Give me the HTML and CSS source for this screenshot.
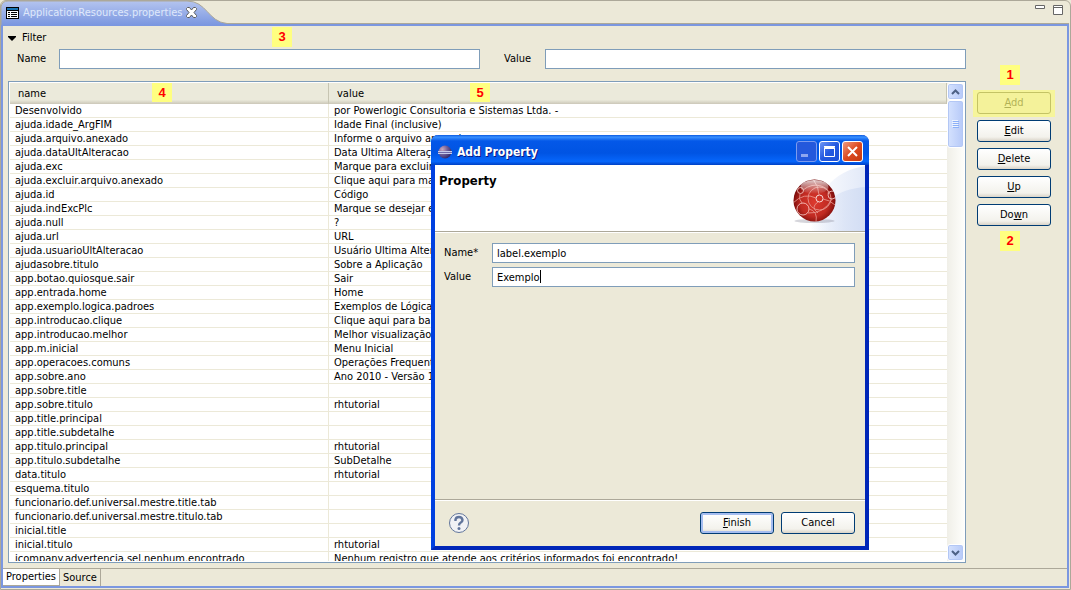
FILE: index.html
```html
<!DOCTYPE html>
<html lang="pt-BR">
<head>
<meta charset="utf-8">
<title>ApplicationResources.properties</title>
<link rel="stylesheet" href="styles.css">
</head>
<body>
<div class="view">
  <header class="view-head">
    <div class="file-tab">
      <svg class="tab-shape" width="232" height="25" viewBox="0 0 232 25" aria-hidden="true">
        <defs><linearGradient id="tabFill" x1="0" y1="0" x2="0" y2="1"><stop offset="0" stop-color="#b4c4ef"/><stop offset="1" stop-color="#7b97e0"/></linearGradient></defs>
        <path d="M0 25V7Q1 1 7 1H186C206 1 207 22 226 23.500H232V25Z" fill="url(#tabFill)"/>
        <path d="M0 25V7Q1 1 7 1H186C206 1 207 22 226 23.500H232" fill="none" stroke="#aca899"/>
      </svg>
      <svg class="file-icon" width="13" height="12" viewBox="0 0 13 12" shape-rendering="crispEdges" aria-hidden="true">
        <path d="M0 0h13v12H0z"/><path d="M1 1h11v2H1z" fill="#1773b5"/><path d="M1 4h11v7H1z" fill="#fff"/>
        <path d="M2 5h2v1H2zm3 0h6v1H5zM2 7h2v1H2zm3 0h6v1H5zM2 9h2v1H2zm3 0h6v1H5z"/>
      </svg>
      <span class="file-name">ApplicationResources.properties</span>
      <button class="tab-close" aria-label="Close"><svg width="11" height="11" viewBox="0 0 11 11"><path d="M1.500.5h2l2 2.500 2-2.500h2l1 1v1L8 5.500l2.500 3v1l-1 1h-2l-2-2.500-2 2.500h-2l-1-1v-1l2.500-3-2.500-3v-1z" fill="#fff" stroke="#5a5a5a"/></svg></button>
    </div>
    <div class="view-tools">
      <button class="tool" aria-label="Minimize"><svg width="10" height="11" viewBox="0 0 10 11"><path d="M.5.5h9v3h-9z" fill="#fff" stroke="#666"/></svg></button>
      <button class="tool" aria-label="Maximize"><svg width="10" height="11" viewBox="0 0 10 11"><path d="M.5.5h9v9h-9zM0 2.500h10" fill="#fff" stroke="#666"/></svg></button>
    </div>
  </header>
  <main class="frame">
    <div class="editor">
      <section class="content">
        <button class="filter-toggle"><svg width="8" height="5" viewBox="0 0 8 5"><path d="M0 0h8v1L4 5 0 1z"/></svg>Filter</button>
        <div class="filter-row">
          <label for="fname">Name</label><input id="fname" type="text">
          <label class="second" for="fvalue">Value</label><input id="fvalue" type="text">
        </div>
        <div class="table-box">
          <div class="table-clip">
            <table>
              <colgroup><col class="col-name"><col></colgroup>
              <thead><tr><th>name</th><th>value</th></tr></thead>
              <tbody>
<tr><td>Desenvolvido</td><td>por Powerlogic Consultoria e Sistemas Ltda. -</td></tr>
<tr><td>ajuda.idade_ArgFIM</td><td>Idade Final (inclusive)</td></tr>
<tr><td>ajuda.arquivo.anexado</td><td>Informe o arquivo anexado</td></tr>
<tr><td>ajuda.dataUltAlteracao</td><td>Data Ultima Alteração</td></tr>
<tr><td>ajuda.exc</td><td>Marque para excluir</td></tr>
<tr><td>ajuda.excluir.arquivo.anexado</td><td>Clique aqui para mar</td></tr>
<tr><td>ajuda.id</td><td>Código</td></tr>
<tr><td>ajuda.indExcPlc</td><td>Marque se desejar e</td></tr>
<tr><td>ajuda.null</td><td>?</td></tr>
<tr><td>ajuda.url</td><td>URL</td></tr>
<tr><td>ajuda.usuarioUltAlteracao</td><td>Usuário Ultima Altera</td></tr>
<tr><td>ajudasobre.titulo</td><td>Sobre a Aplicação</td></tr>
<tr><td>app.botao.quiosque.sair</td><td>Sair</td></tr>
<tr><td>app.entrada.home</td><td>Home</td></tr>
<tr><td>app.exemplo.logica.padroes</td><td>Exemplos de Lógicas</td></tr>
<tr><td>app.introducao.clique</td><td>Clique aqui para baix</td></tr>
<tr><td>app.introducao.melhor</td><td>Melhor visualização a</td></tr>
<tr><td>app.m.inicial</td><td>Menu Inicial</td></tr>
<tr><td>app.operacoes.comuns</td><td>Operações Frequent</td></tr>
<tr><td>app.sobre.ano</td><td>Ano 2010 - Versão 1</td></tr>
<tr><td>app.sobre.title</td><td></td></tr>
<tr><td>app.sobre.titulo</td><td>rhtutorial</td></tr>
<tr><td>app.title.principal</td><td></td></tr>
<tr><td>app.title.subdetalhe</td><td></td></tr>
<tr><td>app.titulo.principal</td><td>rhtutorial</td></tr>
<tr><td>app.titulo.subdetalhe</td><td>SubDetalhe</td></tr>
<tr><td>data.titulo</td><td>rhtutorial</td></tr>
<tr><td>esquema.titulo</td><td></td></tr>
<tr><td>funcionario.def.universal.mestre.title.tab</td><td></td></tr>
<tr><td>funcionario.def.universal.mestre.titulo.tab</td><td></td></tr>
<tr><td>inicial.title</td><td></td></tr>
<tr><td>inicial.titulo</td><td>rhtutorial</td></tr>
<tr><td>jcompany.advertencia.sel.nenhum.encontrado</td><td>Nenhum registro que atende aos critérios informados foi encontrado!</td></tr>
              </tbody>
            </table>
          </div>
          <div class="scrollbar">
            <button class="scroll-btn" aria-label="Scroll up"><svg width="9" height="6" viewBox="0 0 9 6"><path d="M1 5l3.500-3.500L8 5" fill="none" stroke="#4d6185" stroke-width="2"/></svg></button>
            <div class="thumb"><svg width="7" height="8" viewBox="0 0 7 8"><path d="M0 .5h6M0 2.500h6M0 4.500h6M0 6.500h6" stroke="#eef4fe"/><path d="M1 1.500h6M1 3.500h6M1 5.500h6M1 7.500h6" stroke="#8cb0f8"/></svg></div>
            <button class="scroll-btn down" aria-label="Scroll down"><svg width="9" height="6" viewBox="0 0 9 6"><path d="M1 1l3.500 3.500L8 1" fill="none" stroke="#4d6185" stroke-width="2"/></svg></button>
          </div>
        </div>
      </section>
      <aside class="actions">
        <div class="add-wrap"><button class="btn" disabled><u>A</u>dd</button></div>
        <button class="btn"><u>E</u>dit</button>
        <button class="btn"><u>D</u>elete</button>
        <button class="btn"><u>U</u>p</button>
        <button class="btn">Do<u>w</u>n</button>
      </aside>
    </div>
    <nav class="page-tabs">
      <button class="page-tab active">Properties</button>
      <button class="page-tab">Source</button>
    </nav>
  </main>
</div>

<span class="mark m1">1</span>
<span class="mark m2">2</span>
<span class="mark m3">3</span>
<span class="mark m4">4</span>
<span class="mark m5">5</span>

<div class="dialog" role="dialog" aria-labelledby="dlg-title">
  <div class="titlebar">
    <svg width="16" height="16" viewBox="0 0 16 16" aria-hidden="true">
      <defs><radialGradient id="ecl" cx=".3" cy=".3" r=".8"><stop offset="0" stop-color="#c9a9bd"/><stop offset=".5" stop-color="#6c5c98"/><stop offset="1" stop-color="#2a2364"/></radialGradient></defs>
      <circle cx="8" cy="8" r="6.500" fill="url(#ecl)"/><path d="M1 7.500h14M1 9.500h14" stroke="#c5cbea"/><path d="M1 8.500h14" stroke="#6d68a8"/>
    </svg>
    <span class="title" id="dlg-title">Add Property</span>
    <button class="win dim" aria-label="Minimize"><svg width="17" height="17" viewBox="0 0 17 17"><path d="M3 11h7v3H3z" fill="#8ea6f0"/></svg></button>
    <button class="win" aria-label="Maximize"><svg width="17" height="17" viewBox="0 0 17 17"><path d="M3.500 4.500h10v9h-10zM3 5.500h11" fill="none" stroke="#fff"/><path d="M3 3.500h11" stroke="#fff"/></svg></button>
    <button class="win close" aria-label="Close"><svg width="17" height="17" viewBox="0 0 17 17"><path d="M4 4l9 9M13 4l-9 9" stroke="#fff" stroke-width="2"/></svg></button>
  </div>
  <div class="banner">
    <h1>Property</h1>
    <svg width="75" height="66" viewBox="0 0 75 66" aria-hidden="true">
      <defs>
        <linearGradient id="sw" x1="0" y1="0" x2="1" y2="0"><stop offset="0" stop-color="#fff"/><stop offset="1" stop-color="#e2e9f8"/></linearGradient>
        <linearGradient id="sw2" x1="0" y1="0" x2="1" y2="0"><stop offset="0" stop-color="#d5dff5" stop-opacity="0"/><stop offset="1" stop-color="#d3def4"/></linearGradient>
        <radialGradient id="ball" cx=".5" cy=".55" r=".55"><stop offset="0" stop-color="#dd3a2e"/><stop offset=".6" stop-color="#c02a22"/><stop offset="1" stop-color="#6e0606"/></radialGradient>
        <linearGradient id="gl" x1="0" y1="0" x2="0" y2="1"><stop offset="0" stop-color="#fff" stop-opacity=".8"/><stop offset="1" stop-color="#fff" stop-opacity="0"/></linearGradient>
        <clipPath id="bc"><circle cx="24.500" cy="35.500" r="21"/></clipPath>
      </defs>
      <path d="M20 66C24 30 42 6 75 1V66Z" fill="url(#sw)"/>
      <path d="M20 66C26 40 46 24 75 22V66Z" fill="url(#sw2)"/>
      <ellipse cx="24.500" cy="56" rx="20" ry="2" fill="#889" opacity=".35"/>
      <circle cx="24.500" cy="35.500" r="21" fill="url(#ball)"/>
      <g clip-path="url(#bc)" fill="none" stroke="#eb9d95" stroke-opacity=".8">
        <circle cx="29.500" cy="33.500" r="11.500"/>
        <circle cx="29.500" cy="33.500" r="3.500" stroke="#fff"/>
        <circle cx="13" cy="44" r="6" stroke="#fbd5d0"/>
        <circle cx="10.500" cy="25.500" r="3" stroke="#fbd5d0"/>
        <circle cx="42" cy="30" r="4" stroke="#fbd5d0"/>
        <path d="M3 38Q14 27 26 33M33 34Q40 35 45 40M13 25Q22 18 31 21T38 29M10 29Q8 34 12 38M19 44Q28 46 26 57M28 37Q20 42 28 48M23 14Q29 22 29 30M18 48Q34 49 42 34"/>
      </g>
      <ellipse cx="24.500" cy="22" rx="14" ry="7" fill="url(#gl)"/>
    </svg>
  </div>
  <form class="form">
    <label for="pname">Name*</label><input id="pname" type="text" value="label.exemplo">
    <label for="pvalue">Value</label><input id="pvalue" type="text" value="Exemplo">
  </form>
  <span class="caret"></span>
  <footer class="foot">
    <button class="help" aria-label="Help"><svg width="22" height="22" viewBox="0 0 22 22"><circle cx="11" cy="11" r="9.500" fill="#f1f2f5" stroke="#61759b"/><path d="M7.500 9V7.500Q8 5 11 5t3.500 3Q14.500 9.500 12.800 10.500 11 11.500 11 13.500" fill="none" stroke="#61759b" stroke-width="2.400"/><circle cx="11" cy="16.500" r="1.500" fill="#61759b"/></svg></button>
    <button class="btn default"><u>F</u>inish</button>
    <button class="btn">Cancel</button>
  </footer>
</div>
</body>
</html>
```
FILE: styles.css
```css
* { box-sizing: border-box; }
body {
  margin: 0;
  background: #ece9d8;
  color: #000;
  font: 11px/14px "DejaVu Sans Condensed", Tahoma, "DejaVu Sans", sans-serif;
}
button, input { font: inherit; color: inherit; margin: 0; }
button { padding: 0; border: 0; background: none; }
svg { display: block; flex: none; }
input {
  min-width: 0;
  width: 100%;
  height: 20px;
  padding: 0 4px;
  border: 1px solid #7f9db9;
  border-radius: 0;
  background: #fff;
}

.view {
  display: flex;
  flex-direction: column;
  height: 100vh;
  padding: 0 1px 1px 0;
  border: 1px solid #aca899;
  border-radius: 6px 6px 0 0;
}
.view-head {
  display: flex;
  justify-content: space-between;
  flex: none;
  height: 23px;
  border-bottom: 1px solid #aca899;
}
.file-tab {
  position: relative;
  display: flex;
  align-items: center;
  height: 23px;
  padding-left: 5px;
  gap: 4px;
  color: #dfe8fb;
}
.tab-shape { position: absolute; left: 0; top: -1px; }
.file-icon, .file-name, .tab-close { position: relative; }
.view-tools { display: flex; gap: 8px; padding: 4px 6px 0 0; }
.tool { height: 11px; }

.frame {
  display: flex;
  flex-direction: column;
  flex: 1;
  min-height: 0;
  border: 2px solid #7b97e0;
}
.editor { display: flex; flex: 1; min-height: 0; padding: 5px 16px 5px 5px; gap: 11px; }
.content { display: flex; flex-direction: column; flex: 1; min-width: 0; }
.filter-toggle { display: flex; align-items: center; align-self: flex-start; gap: 6px; height: 14px; }
.filter-row {
  display: grid;
  grid-template-columns: 42px 1fr 65px 1fr;
  align-items: center;
  padding: 4px 0 12px 9px;
}
.second { padding-left: 24px; }

.table-box {
  display: flex;
  flex: 1;
  min-height: 0;
  padding: 1px;
  border: 1px solid #7f9db9;
  background: #fff;
}
.table-clip { flex: 1; min-width: 0; overflow: hidden; }
table { width: 100%; table-layout: fixed; border-collapse: separate; border-spacing: 0; }
.col-name { width: 319px; }
th {
  height: 21px;
  padding: 1px 8px 0;
  text-align: left;
  font-weight: normal;
  background: linear-gradient(#ebeadb 0 80%, #cbc7b8);
  border-right: 1px solid #c7c5b2;
}
td {
  height: 14px;
  padding: 0 5px;
  line-height: 13px;
  white-space: nowrap;
  overflow: hidden;
  border-right: 1px solid #ece9d8;
  border-bottom: 1px solid #ece9d8;
}
td:last-child { border-right: 0; }

.scrollbar {
  display: flex;
  flex-direction: column;
  align-items: stretch;
  width: 17px;
  background: linear-gradient(90deg, #f0efe8, #fefefb);
}
.scroll-btn, .thumb {
  display: flex;
  align-items: center;
  justify-content: center;
  flex: none;
  height: 17px;
  border: 1px solid #fff;
  border-radius: 3px;
  background: linear-gradient(90deg, #d5e2fe, #b6c9f8);
  box-shadow: inset 0 0 0 1px #b3c7f5;
}
.thumb { height: 48px; }
.down { margin-top: auto; }

.actions { display: flex; flex-direction: column; gap: 6px; width: 74px; padding-top: 61px; }
.btn {
  width: 74px;
  height: 22px;
  flex: none;
  border: 1px solid #003c74;
  border-radius: 3px;
  background: linear-gradient(#fff, #f3f2ec 80%, #d9d4c8);
}
.add-wrap { position: relative; height: 22px; }
.add-wrap::after {
  content: "";
  position: absolute;
  inset: -2px -4px -3px;
  background: rgba(255, 255, 105, .55);
}
.btn:disabled { border-color: #7c7a60; background: #e6e3d4; color: #55533f; }

.page-tabs { display: flex; flex: none; height: 18px; border-top: 1px solid #aca899; }
.page-tab { height: 17px; padding: 0 3px; border-right: 1px solid #aca899; }
.page-tab.active { background: #fff; border-bottom: 1px solid #aca899; }

.mark {
  position: absolute;
  width: 20px;
  height: 20px;
  background: #ffff80;
  color: #f00;
  font: bold 13px/20px "Liberation Sans", Arial, sans-serif;
  text-align: center;
}
.m1 { left: 1000px; top: 65px; }
.m2 { left: 1000px; top: 231px; }
.m3 { left: 272px; top: 27px; }
.m4 { left: 152px; top: 83px; height: 19px; }
.m5 { left: 470px; top: 83px; height: 19px; }

.dialog {
  position: absolute;
  left: 431px;
  top: 135px;
  display: flex;
  flex-direction: column;
  width: 438px;
  height: 415px;
  border: 4px solid #0040e0;
  border-top: 0;
  border-color: #0040e0 #0026b8 #0026b8 #0040e0;
  border-radius: 7px 7px 0 0;
  background: #ece9d8;
}
.titlebar {
  display: flex;
  align-items: center;
  flex: none;
  height: 30px;
  margin: 0 -4px;
  padding: 3px 6px 0;
  gap: 2px;
  border-radius: 7px 7px 0 0;
  background: linear-gradient(#0a5ae0, #3a91ff 7%, #0458e8 20%, #0054e3 60%, #0666fb 88%, #0040c4);
  color: #fff;
}
.title {
  flex: 1;
  padding-left: 2px;
  font-size: 12px;
  font-weight: bold;
  text-shadow: 1px 1px 0 #0a1883;
}
.win {
  display: flex;
  align-items: center;
  justify-content: center;
  width: 21px;
  height: 21px;
  border: 1px solid #fff;
  border-radius: 3px;
  background: linear-gradient(135deg, #6f96f5, #2459e0 50%, #1c50d8);
}
.dim { border-color: #7c9bee; background: #2458dc; }
.close { background: linear-gradient(135deg, #f09a80, #dd4a20 50%, #c43a10); }
.banner {
  display: flex;
  justify-content: space-between;
  flex: none;
  height: 67px;
  background: #fff;
  border-bottom: 1px solid #aca899;
  box-shadow: 0 1px #fff;
}
h1 { margin: 9px 4px; font-size: 13px; line-height: 14px; }
.form {
  display: grid;
  grid-template-columns: 48px 1fr;
  row-gap: 4px;
  align-items: center;
  padding: 11px 10px 0 9px;
}
.caret { position: absolute; left: 105px; top: 135px; width: 1px; height: 13px; background: #000; }
.foot {
  display: flex;
  align-items: center;
  gap: 7px;
  height: 47px;
  margin-top: auto;
  padding: 0 10px 0 13px;
  border-top: 1px solid #aca899;
  box-shadow: inset 0 1px #fff;
}
.help { margin-right: auto; }
.default { box-shadow: inset 0 0 0 2px #a5bdf0; }
```
